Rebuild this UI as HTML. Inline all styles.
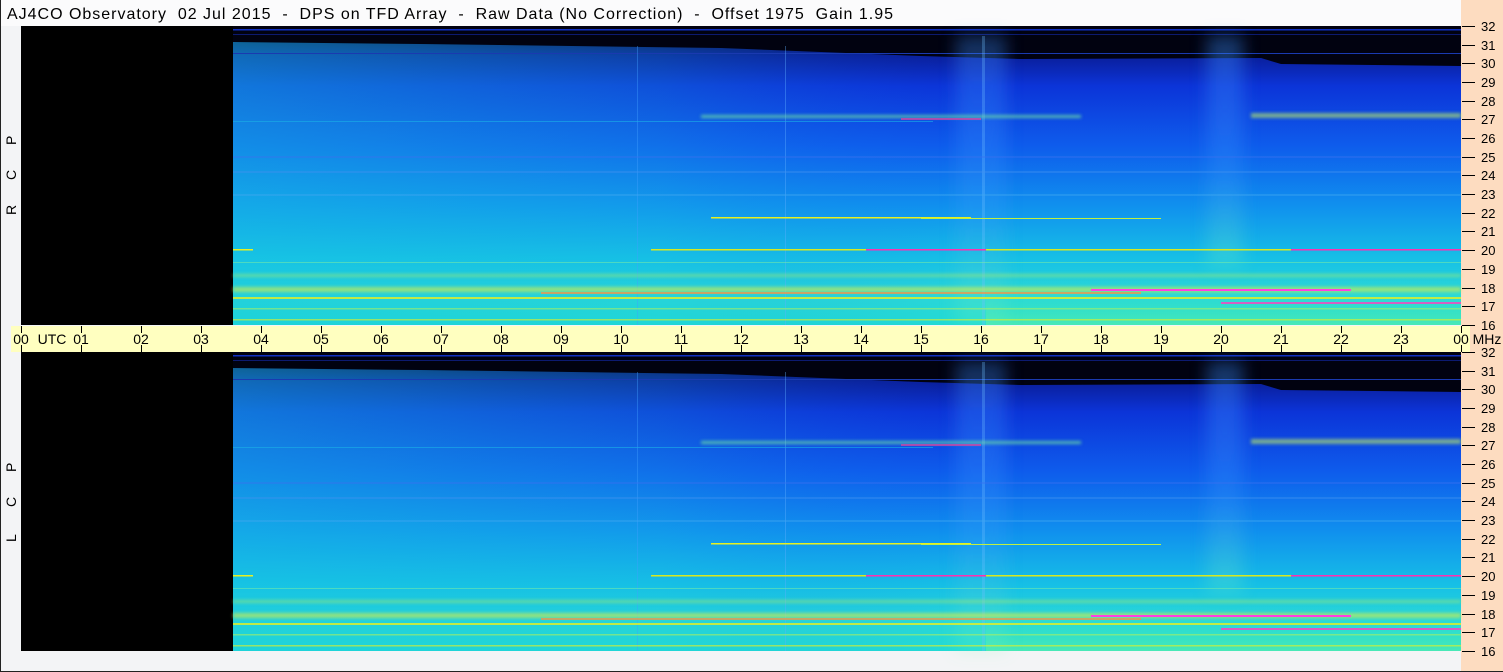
<!DOCTYPE html>
<html><head><meta charset="utf-8"><style>
html,body{margin:0;padding:0;background:#f3f4f6;width:1503px;height:672px;overflow:hidden}
svg{display:block}
text{font-family:"Liberation Sans","DejaVu Sans",sans-serif;fill:#000}
</style></head><body>
<svg width="1503" height="672" viewBox="0 0 1503 672" xmlns="http://www.w3.org/2000/svg">
<defs>
<filter id="bl" x="-50%" y="-10%" width="200%" height="120%"><feGaussianBlur stdDeviation="8"/></filter>
<filter id="bl2" x="-10%" y="-50%" width="120%" height="200%"><feGaussianBlur stdDeviation="1.5"/></filter>
<linearGradient id="vg" x1="0" y1="0" x2="0" y2="1">
<stop offset="0" stop-color="#020418"/>
<stop offset="0.1" stop-color="#0a1e9a"/>
<stop offset="0.2" stop-color="#0c34d8"/>
<stop offset="0.4" stop-color="#0e5cec"/>
<stop offset="0.6" stop-color="#1090ee"/>
<stop offset="0.78" stop-color="#16c0e6"/>
<stop offset="0.9" stop-color="#2ad8d8"/>
<stop offset="1" stop-color="#22dcd4"/>
</linearGradient>
<linearGradient id="hg" x1="0" y1="0" x2="1" y2="0">
<stop offset="0" stop-color="#18c8e0" stop-opacity="0.45"/>
<stop offset="0.35" stop-color="#18c0e0" stop-opacity="0.2"/>
<stop offset="0.6" stop-color="#1060f0" stop-opacity="0"/>
</linearGradient>
<linearGradient id="gl" x1="0" y1="0" x2="0" y2="1">
<stop offset="0" stop-color="#3a8cff" stop-opacity="0.5"/>
<stop offset="0.6" stop-color="#40a0ff" stop-opacity="0.3"/>
<stop offset="1" stop-color="#80ffb0" stop-opacity="0.3"/>
</linearGradient>
<linearGradient id="gr" x1="0" y1="0" x2="0" y2="1">
<stop offset="0" stop-color="#60ff90" stop-opacity="0"/>
<stop offset="0.55" stop-color="#60ff90" stop-opacity="0.05"/>
<stop offset="1" stop-color="#90ff80" stop-opacity="0.35"/>
</linearGradient>
<g id="panel">
<rect x="0" y="0" width="212" height="299" fill="#000"/>
<rect x="212" y="0" width="1228" height="299" fill="url(#vg)"/>
<rect x="212" y="0" width="1228" height="299" fill="url(#hg)"/>
<polygon points="212,0 1440,0 1440,40 1260,38 1240,32 1000,33 900,30 700,22 400,18 212,16" fill="#010210"/>
<rect x="212" y="3" width="1228" height="1.5" fill="#1030c0"/>
<rect x="212" y="27" width="1228" height="1" fill="#1a3ab0"/>
<rect x="212" y="8" width="1228" height="1" fill="#0c1a70"/>
<rect x="965" y="240" width="475" height="59" fill="url(#gr)"/>
<g filter="url(#bl)">
<rect x="935" y="10" width="50" height="289" fill="url(#gl)" opacity="0.7"/>
<rect x="1186" y="10" width="36" height="230" fill="url(#gl)" opacity="0.8"/>
</g>
<rect x="961" y="10" width="3" height="289" fill="#70c0ff" opacity="0.3"/>
<rect x="616" y="20" width="1" height="279" fill="#40a0ff" opacity="0.4"/>
<rect x="764" y="20" width="1" height="279" fill="#60b0ff" opacity="0.4"/>
<g filter="url(#bl2)">
<rect x="680" y="89" width="380" height="3" fill="#70e8a0" opacity="0.7"/>
<rect x="1230" y="87" width="210" height="5" fill="#c0f060" opacity="0.6"/>
<rect x="212" y="248" width="1228" height="3" fill="#b0f060" opacity="0.5"/>
<rect x="212" y="261" width="1228" height="5" fill="#e0f040" opacity="0.6"/>
</g>
<rect x="880" y="92" width="80" height="2" fill="#e040a0" opacity="0.7"/>
<rect x="212" y="95" width="700" height="1" fill="#1ab0e8" opacity="0.6"/>
<rect x="690" y="191" width="260" height="1.5" fill="#e8f020"/>
<rect x="900" y="192" width="240" height="1" fill="#c0f040"/>
<rect x="212" y="223" width="20" height="1.5" fill="#e8f020"/>
<rect x="630" y="223" width="810" height="1.5" fill="#d8e820"/>
<rect x="845" y="223" width="120" height="1.5" fill="#ff30b0"/>
<rect x="1270" y="223" width="170" height="1.5" fill="#ff30b0"/>
<rect x="520" y="266" width="600" height="2" fill="#ff9040" opacity="0.7"/>
<rect x="1070" y="263" width="260" height="2" fill="#ff40e0"/>
<rect x="212" y="271" width="1228" height="2" fill="#e8f020" opacity="0.8"/>
<rect x="1200" y="276" width="240" height="2" fill="#ff40c0" opacity="0.8"/>
<rect x="212" y="282" width="1228" height="1.5" fill="#a8f060" opacity="0.6"/>
<rect x="212" y="293" width="1228" height="1.5" fill="#e8f020" opacity="0.6"/>
<rect x="212" y="236" width="1228" height="1" fill="#80f0a0" opacity="0.5"/>
<rect x="212" y="130" width="1228" height="2" fill="#3a70f0" opacity="0.4"/>
<rect x="212" y="145" width="1228" height="2" fill="#4090f0" opacity="0.4"/>
<rect x="212" y="168" width="1228" height="2" fill="#40a8f0" opacity="0.4"/>
</g>
</defs>
<rect x="0" y="0" width="1503" height="26" fill="#fbfbfc"/>
<rect x="1461" y="0" width="42" height="672" fill="#fddcc0"/>
<text x="7" y="19" font-size="16" xml:space="preserve" textLength="886" lengthAdjust="spacing">AJ4CO Observatory  02 Jul 2015  -  DPS on TFD Array  -  Raw Data (No Correction)  -  Offset 1975  Gain 1.95</text>
<use href="#panel" x="21" y="26"/>
<use href="#panel" x="21" y="352"/>
<rect x="0" y="0" width="1" height="672" fill="#222"/>
<rect x="0" y="671" width="1503" height="1" fill="#222"/>
<rect x="11" y="326" width="1459" height="26" fill="#ffffc0"/>
<g font-size="14">
<text transform="translate(16,145) rotate(-90)">P</text>
<text transform="translate(16,180) rotate(-90)">C</text>
<text transform="translate(16,215) rotate(-90)">R</text>
<text transform="translate(16,472) rotate(-90)">P</text>
<text transform="translate(16,507) rotate(-90)">C</text>
<text transform="translate(16,542) rotate(-90)">L</text>
</g>
<g stroke="#000" stroke-width="1">
<path d="M21.5 326v7M21.5 345v7M81.5 326v7M81.5 345v7M141.5 326v7M141.5 345v7M201.5 326v7M201.5 345v7M261.5 326v7M261.5 345v7M321.5 326v7M321.5 345v7M381.5 326v7M381.5 345v7M441.5 326v7M441.5 345v7M501.5 326v7M501.5 345v7M561.5 326v7M561.5 345v7M621.5 326v7M621.5 345v7M681.5 326v7M681.5 345v7M741.5 326v7M741.5 345v7M801.5 326v7M801.5 345v7M861.5 326v7M861.5 345v7M921.5 326v7M921.5 345v7M981.5 326v7M981.5 345v7M1041.5 326v7M1041.5 345v7M1101.5 326v7M1101.5 345v7M1161.5 326v7M1161.5 345v7M1221.5 326v7M1221.5 345v7M1281.5 326v7M1281.5 345v7M1341.5 326v7M1341.5 345v7M1401.5 326v7M1401.5 345v7M1461.5 326v7M1461.5 345v7"/>
</g>
<g font-size="14" text-anchor="middle">
<text x="21" y="344">00</text><text x="52" y="344">UTC</text>
<text x="81" y="344">01</text><text x="141" y="344">02</text><text x="201" y="344">03</text>
<text x="261" y="344">04</text><text x="321" y="344">05</text><text x="381" y="344">06</text>
<text x="441" y="344">07</text><text x="501" y="344">08</text><text x="561" y="344">09</text>
<text x="621" y="344">10</text><text x="681" y="344">11</text><text x="741" y="344">12</text>
<text x="801" y="344">13</text><text x="861" y="344">14</text><text x="921" y="344">15</text>
<text x="981" y="344">16</text><text x="1041" y="344">17</text><text x="1101" y="344">18</text>
<text x="1161" y="344">19</text><text x="1221" y="344">20</text><text x="1281" y="344">21</text>
<text x="1341" y="344">22</text><text x="1401" y="344">23</text><text x="1461" y="344">00</text>
<text x="1487" y="344">MHz</text>
</g>
<g stroke="#000" stroke-width="1">
<path d="M1462 26.5h13M1462 45.5h13M1462 63.5h13M1462 82.5h13M1462 101.5h13M1462 119.5h13M1462 138.5h13M1462 157.5h13M1462 175.5h13M1462 194.5h13M1462 213.5h13M1462 231.5h13M1462 250.5h13M1462 269.5h13M1462 288.5h13M1462 306.5h13M1462 325.5h13"/>
<path d="M1462 352.5h13M1462 371.5h13M1462 389.5h13M1462 408.5h13M1462 427.5h13M1462 445.5h13M1462 464.5h13M1462 483.5h13M1462 501.5h13M1462 520.5h13M1462 539.5h13M1462 557.5h13M1462 576.5h13M1462 595.5h13M1462 614.5h13M1462 632.5h13M1462 651.5h13"/>
</g>
<g font-size="13">
<text x="1481" y="31">32</text><text x="1481" y="50">31</text><text x="1481" y="68">30</text><text x="1481" y="87">29</text>
<text x="1481" y="106">28</text><text x="1481" y="124">27</text><text x="1481" y="143">26</text><text x="1481" y="162">25</text>
<text x="1481" y="180">24</text><text x="1481" y="199">23</text><text x="1481" y="218">22</text><text x="1481" y="236">21</text>
<text x="1481" y="255">20</text><text x="1481" y="274">19</text><text x="1481" y="293">18</text><text x="1481" y="311">17</text>
<text x="1481" y="330">16</text>
<text x="1481" y="357">32</text><text x="1481" y="376">31</text><text x="1481" y="394">30</text><text x="1481" y="413">29</text>
<text x="1481" y="432">28</text><text x="1481" y="450">27</text><text x="1481" y="469">26</text><text x="1481" y="488">25</text>
<text x="1481" y="506">24</text><text x="1481" y="525">23</text><text x="1481" y="544">22</text><text x="1481" y="562">21</text>
<text x="1481" y="581">20</text><text x="1481" y="600">19</text><text x="1481" y="619">18</text><text x="1481" y="637">17</text>
<text x="1481" y="656">16</text>
</g>
</svg>
</body></html>
